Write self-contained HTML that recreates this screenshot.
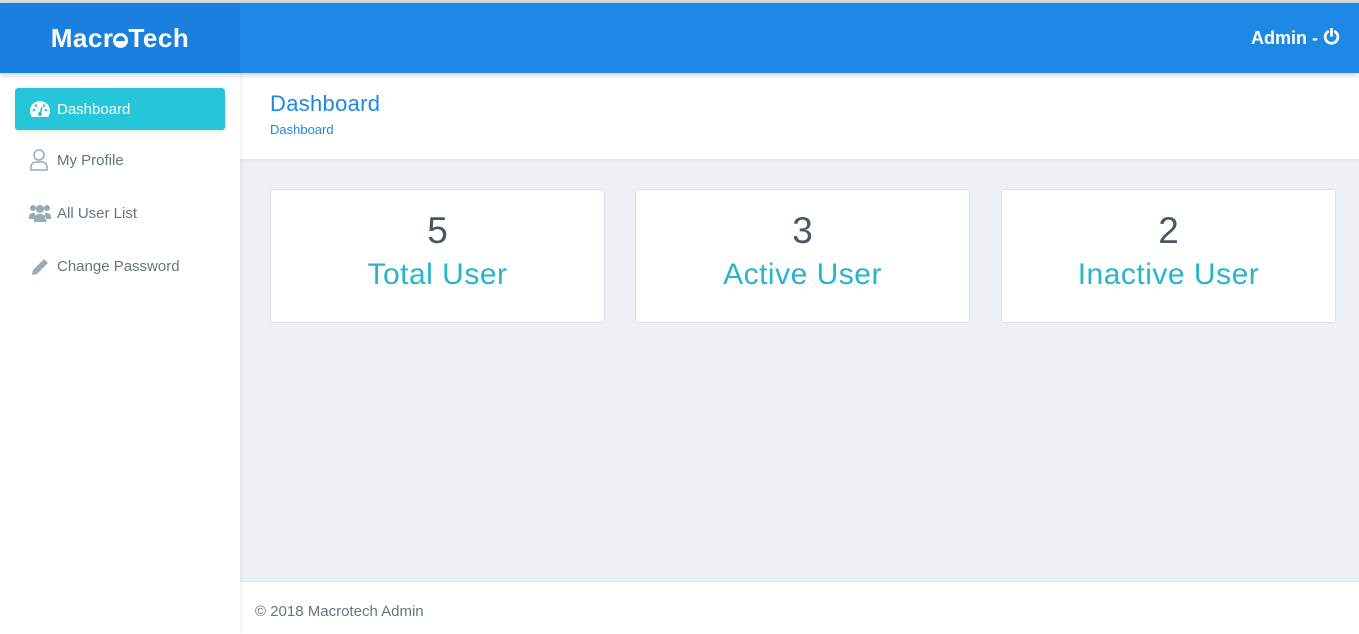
<!DOCTYPE html>
<html><head><style>
*{box-sizing:border-box;margin:0;padding:0}
body{width:1359px;height:634px;overflow:hidden;font-family:"Liberation Sans",sans-serif;background:#edf1f5;position:relative}
.top{position:absolute;left:0;top:0;width:1359px;height:3px;background:#d6dde3}
.hdr{position:absolute;left:0;top:3px;width:1359px;height:70px;background:#1e88e5;box-shadow:0 2px 5px rgba(0,0,0,.2);z-index:3}
.logo{position:absolute;left:0;top:0;width:240px;height:70px;background:#1b80dd;color:#fff;font-weight:bold;font-size:26px;text-align:center;line-height:70px;letter-spacing:.5px}
.admin{position:absolute;right:19px;top:25px;color:#fff;font-size:18px;font-weight:bold}
.side{position:absolute;left:0;top:73px;width:240px;height:561px;background:#fff;box-shadow:1px 0 4px rgba(0,0,0,.08);z-index:2}
.nav{position:absolute;left:15px;width:210px;height:42px;font-size:15px;color:#67757c;display:flex;align-items:center;padding-left:14px}
.nav svg{margin-right:6px}
.act{background:#26c6da;color:#fff;border-radius:3px;box-shadow:0 2px 4px rgba(0,0,0,.1)}
.bc{position:absolute;left:240px;top:73px;width:1119px;height:86px;background:#fff;box-shadow:0 1px 3px rgba(0,0,0,.06)}
.bc h1{position:absolute;left:30px;top:18px;font-weight:normal;font-size:22px;color:#1e88e5;letter-spacing:.3px}
.bc span{position:absolute;left:30px;top:49px;font-size:13px;color:#1e88e5}
.card{position:absolute;top:189px;width:335px;height:134px;background:#fff;border:1px solid #dbe1e6;border-radius:3px;text-align:center}
.card .n{font-size:37px;color:#455a64;margin-top:21px;line-height:40px}
.card .l{font-size:30px;color:#26b5cc;margin-top:6px;line-height:36px;letter-spacing:.5px}
.foot{position:absolute;left:240px;top:581px;width:1119px;height:53px;background:#fff;border-top:1px solid #e5e9ec;color:#67757c;font-size:15px;padding:21px 0 0 15px}
</style></head><body>
<div class="top"></div>
<div class="hdr"><div class="logo">Macr<span style="display:inline-block;width:15px;height:15px;border:3px solid #fff;border-radius:50%;vertical-align:-1px;background:linear-gradient(#1b80dd 55%,#fff 55%)"></span>Tech</div>
<div class="admin">Admin - <svg width="17" height="17" viewBox="0 0 16 16" style="vertical-align:-1px"><path d="M4.5 3.5A6 6 0 1 0 11.5 3.5" fill="none" stroke="#fff" stroke-width="2.6" stroke-linecap="round"/><path d="M8 1v6" stroke="#fff" stroke-width="2.6" stroke-linecap="round"/></svg></div></div>
<div class="side">
<div class="nav act" style="top:15px"><svg width="22" height="18" viewBox="0 0 22 18"><path d="M11 1A10 10 0 0 0 1 11c0 2.5 1 4.6 2 6h16c1-1.4 2-3.5 2-6A10 10 0 0 0 11 1z" fill="#fff"/><circle cx="11" cy="14" r="2" fill="#26c6da"/><path d="M11 14l2-7" stroke="#26c6da" stroke-width="1.6"/><circle cx="5" cy="10" r="1.3" fill="#26c6da"/><circle cx="7" cy="5.5" r="1.3" fill="#26c6da"/><circle cx="15" cy="5.5" r="1.3" fill="#26c6da"/><circle cx="17" cy="10" r="1.3" fill="#26c6da"/></svg>Dashboard</div>
<div class="nav" style="top:66px"><svg width="22" height="22" viewBox="0 0 22 22"><circle cx="10" cy="6" r="5" fill="none" stroke="#99abb4" stroke-width="1.5"/><path d="M2 21v-3a5 5 0 0 1 5-5h6a5 5 0 0 1 5 5v3z" fill="none" stroke="#99abb4" stroke-width="1.5"/></svg>My Profile</div>
<div class="nav" style="top:119px"><svg width="22" height="20" viewBox="0 0 22 20"><circle cx="4" cy="5" r="3" fill="#99abb4"/><circle cx="18" cy="5" r="3" fill="#99abb4"/><circle cx="11" cy="6" r="4" fill="#99abb4"/><path d="M0 15a4 4 0 0 1 4-5h2v6H0zM22 15a4 4 0 0 0-4-5h-2v6h6zM5 19v-3a5 5 0 0 1 5-5h2a5 5 0 0 1 5 5v3z" fill="#99abb4"/></svg>All User List</div>
<div class="nav" style="top:172px"><svg width="22" height="20" viewBox="0 0 22 20"><path d="M3 19l1-5L15 3l4 4L8 18z" fill="#99abb4"/></svg>Change Password</div>
</div>
<div class="bc"><h1>Dashboard</h1><span>Dashboard</span></div>
<div class="card" style="left:270px"><div class="n">5</div><div class="l">Total User</div></div>
<div class="card" style="left:635px"><div class="n">3</div><div class="l">Active User</div></div>
<div class="card" style="left:1001px"><div class="n">2</div><div class="l">Inactive User</div></div>
<div class="foot">© 2018 Macrotech Admin</div>
</body></html>
